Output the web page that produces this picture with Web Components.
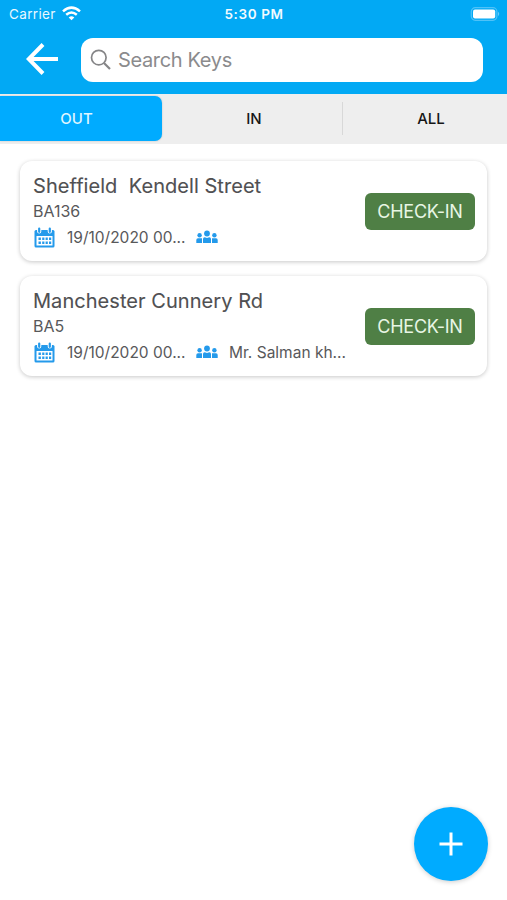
<!DOCTYPE html>
<html lang="en"><head><meta charset="utf-8"><title>Keys</title>
<style>
html,body{margin:0;height:100%}
body{font-family:Inter,"Liberation Sans",sans-serif;background:#fff}
</style></head><body>
<keys-app></keys-app>
<script>
const define = (name, html, setup) => customElements.define(name, class extends HTMLElement {
  constructor() {
    super();
    const t = document.createElement('template');
    t.innerHTML = html;
    this.attachShadow({mode: 'open'}).append(t.content.cloneNode(true));
  }
  connectedCallback() { if (setup) setup(this); }
});

define('status-bar', `<style>
:host{display:grid;grid-template-columns:1fr auto 1fr;align-items:center;height:27px;padding:0 7px 0 9px;color:#e9f8ff;font-size:13.5px;line-height:16px;box-sizing:border-box}
.left{display:flex;align-items:center;gap:6px}
.carrier{letter-spacing:.35px}
.time{font-weight:600;font-size:13.5px;color:#f2fbff;letter-spacing:.6px;margin-left:-1px}
.battery{justify-self:end}
svg{display:block}
</style>
<div class="left"><span class="carrier">Carrier</span>
<svg width="19" height="15" viewBox="0 0 19 15" fill="none" stroke="#fff" stroke-width="2.500"><path d="M1 5.400Q9.500 -2.200 18 5.400"/><path d="M4.200 8.800Q9.500 4.300 14.800 8.800"/><path d="M9.500 14.200L6.700 11.400Q9.500 9.300 12.300 11.400Z" fill="#fff" stroke="none"/></svg></div>
<span class="time">5:30 PM</span>
<svg class="battery" width="30" height="14" viewBox="0 0 30 14"><rect x="1.300" y=".7" width="25.600" height="12.600" rx="4" fill="none" stroke="#4fc2f8" stroke-width="1.200"/><rect x="3" y="2.500" width="22.200" height="9" rx="2" fill="#fff"/><path d="M28.100 4.800q2.200 2.200 0 4.400z" fill="#73cffa"/></svg>`);

define('search-field', `<style>
:host{display:flex;align-items:center;box-sizing:border-box;height:44px;padding:0 9px;gap:6px;background:#fff;border-radius:12px;color:#8b8b8d;font-size:20px;line-height:24px;letter-spacing:-.35px}
svg{display:block}
</style>
<svg width="22" height="22" viewBox="0 0 22 22" fill="none" stroke="#858587" stroke-width="1.700"><circle cx="8.800" cy="8.600" r="7.300"/><path d="M14 14l6 6" stroke-width="2.200"/></svg>
<slot></slot>`);

define('nav-header', `<style>
:host{display:flex;align-items:center;height:67px;padding:0 24px 0 26px;box-sizing:border-box;gap:23px}
search-field{flex:1;margin-bottom:1px}
svg{display:block;flex:none;margin-bottom:4px}
</style>
<svg width="32" height="32" viewBox="0 0 32 32" fill="none" stroke="#fff" stroke-width="4"><path d="M17 1.500L2.700 16L17 30.500M2.500 16H32"/></svg>
<search-field>Search Keys</search-field>`);

define('tab-item', `<style>
:host{display:flex;align-items:center;justify-content:center;height:45px;box-sizing:border-box;color:#161616;font-size:15px;font-weight:500;line-height:20px}
:host([active]){background:#00abff;color:#dff5ff;border-radius:0 7px 7px 0;box-shadow:0 0 2px #0003}
:host([divided])::before{content:"";position:absolute;left:0;top:6px;width:1px;height:33px;background:#d8d8d8}
:host([divided]){position:relative}
</style><slot></slot>`);

define('tab-bar', `<style>
:host{display:grid;grid-template-columns:162px 1fr 165px;height:50px;background:#eee;padding-top:2px;box-sizing:border-box;align-items:start}
.out{padding-right:9px}.all{padding-left:13px}.in{padding-left:4px}
</style>
<tab-item class="out" active>OUT</tab-item><tab-item class="in">IN</tab-item><tab-item class="all" divided>ALL</tab-item>`);

define('calendar-icon', `<style>:host{display:block;flex:none}svg{display:block}</style>
<svg width="21" height="21" viewBox="0 0 21 21"><path d="M2 3h17q1.500 0 1.500 1.500v14.500q0 1.500-1.500 1.500H2q-1.500 0-1.500-1.500V4.500Q.5 3 2 3z" fill="#249aeb"/><path d="M2.500 9h16v9.500h-16z" fill="#fff"/><g stroke="#fff" stroke-width="4.200" stroke-linecap="round"><path d="M5.200 2v2.500M15.800 2v2.500"/></g><g stroke="#249aeb" stroke-width="2.200" stroke-linecap="round"><path d="M5.200 1.500v3.300M15.800 1.500v3.300"/></g><path d="M8.200 10.500h2.200v2.400H8.200zM11.600 10.500h2.200v2.400h-2.200zM15 10.500h2.200v2.400H15zM4.500 14.500h2.400v2.400H4.500zM8.200 14.500h2.200v2.400H8.200zM11.600 14.500h2.200v2.400h-2.200zM15 14.500h2.200v2.400H15zM4.500 10.500h2.400v2.400H4.500z" fill="#249aeb"/></svg>`);

define('people-icon', `<style>:host{display:block;flex:none}svg{display:block}</style>
<svg width="22" height="14" viewBox="0 0 22 14" fill="#249aeb"><circle cx="11" cy="3.500" r="2.900"/><circle cx="3.600" cy="5.200" r="2.200"/><circle cx="18.400" cy="5.200" r="2.200"/><path d="M7 13V9Q7 7.200 8.700 7.200L11 8L13.300 7.200Q15 7.200 15 9V13zM.3 13V10Q.3 8.200 2 8.200H6V13zM21.700 13V10Q21.700 8.200 20 8.200H16V13z"/></svg>`);

define('key-card', `<style>
:host{display:flex;align-items:center;justify-content:space-between;box-sizing:border-box;height:100px;padding:0 12px 0 13px;border-radius:12px;background:#fff;box-shadow:0 1px 4px #00000038;color:#58585a}
.info{height:100px;box-sizing:border-box;padding-top:13px}
.title{font-size:20px;line-height:24px;white-space:pre;color:#505052;letter-spacing:.05px;-webkit-text-stroke:.1px #505052}
.code{font-size:16px;line-height:20px;margin-top:3px}
.meta{display:flex;align-items:center;height:24px;margin-top:4px;font-size:15.5px;padding-left:1px}
.date{margin-left:12px;width:129px;white-space:nowrap}
.who{margin-left:11px;white-space:nowrap}
.btn{width:110px;height:37px;box-sizing:border-box;border:0;padding:1px 0 0;border-radius:6px;background:#4f7f45;color:#e8f6e4;font:18px/36px Inter,"Liberation Sans",sans-serif;letter-spacing:-.25px;text-align:center}
</style>
<div class="info"><div class="title"><slot></slot></div><div class="code"></div>
<div class="meta"><calendar-icon></calendar-icon><div class="date"></div><people-icon></people-icon><div class="who"></div></div></div>
<button class="btn">CHECK-IN</button>`, el => {
  for (const name of ['code', 'date', 'who'])
    el.shadowRoot.querySelector('.' + name).textContent = el.getAttribute(name) || '';
});

define('add-button', `<style>
:host{display:flex;align-items:center;justify-content:center;width:74px;height:74px;border-radius:50%;background:#00abff;box-shadow:0 1px 5px #0003;position:absolute;right:19px;bottom:19px}
svg{display:block}
</style><svg width="24" height="24" viewBox="0 0 24 24" stroke="#fff" stroke-width="3"><path d="M12 .5v23M.5 12h23"/></svg>`);

define('keys-app', `<style>
:host{display:block;position:relative;width:507px;height:900px;overflow:hidden;background:#fff}
header{background:#02a9f4}
main{display:flex;flex-direction:column;gap:15px;padding:17px 20px 0}
</style>
<header><status-bar></status-bar><nav-header></nav-header></header>
<tab-bar></tab-bar>
<main>
<key-card code="BA136" date="19/10/2020 00...">Sheffield&nbsp; Kendell Street</key-card>
<key-card code="BA5" date="19/10/2020 00..." who="Mr. Salman kh...">Manchester Cunnery Rd</key-card>
</main>
<add-button></add-button>`);
</script></body></html>
